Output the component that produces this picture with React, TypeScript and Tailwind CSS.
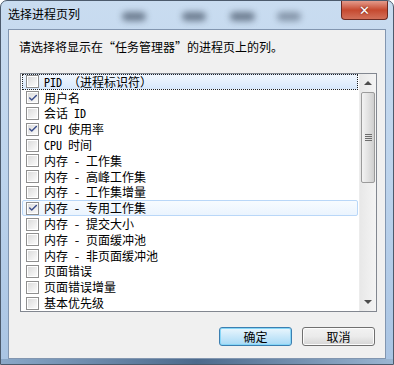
import { Check } from "lucide-react";

const FONT = {
  fontFamily: '"Noto Sans Mono CJK SC", "Noto Sans CJK SC", monospace',
};

const ITEMS: { label: string; checked?: boolean; focus?: boolean; hover?: boolean }[] = [
  { label: "PID （进程标识符）", focus: true },
  { label: "用户名", checked: true },
  { label: "会话 ID" },
  { label: "CPU 使用率", checked: true },
  { label: "CPU 时间" },
  { label: "内存 - 工作集" },
  { label: "内存 - 高峰工作集" },
  { label: "内存 - 工作集增量" },
  { label: "内存 - 专用工作集", checked: true, hover: true },
  { label: "内存 - 提交大小" },
  { label: "内存 - 页面缓冲池" },
  { label: "内存 - 非页面缓冲池" },
  { label: "页面错误" },
  { label: "页面错误增量" },
  { label: "基本优先级" },
];

function Checkbox({ checked }: { checked?: boolean }) {
  return (
    <span className="w-[13px] h-[13px] flex-shrink-0 border border-[#8f8f8f] bg-white p-[1px] flex">
      <span className="flex-1 bg-gradient-to-br from-[#dcdcdc] to-[#fbfbfb] flex items-center justify-center">
        {checked && <Check className="w-[10px] h-[10px] text-[#3c4f8c]" strokeWidth={3.5} />}
      </span>
    </span>
  );
}

function Row({ item }: { item: (typeof ITEMS)[number] }) {
  let box = "border border-transparent";
  if (item.focus)
    box = "border border-dotted border-[#222] bg-gradient-to-b from-[#f1f7fe] to-[#d7e8fc]";
  if (item.hover)
    box = "border border-[#b9d7f8] rounded-[2px] bg-gradient-to-b from-[#f7fbff] to-[#ebf4fe]";
  return (
    <div className={`h-[16px] flex items-center gap-[5px] pl-[3px] mr-[1px] ml-[1px] ${box}`}>
      <Checkbox checked={item.checked} />
      <span className="text-[12px] leading-none text-black whitespace-pre">{item.label}</span>
    </div>
  );
}

function Scrollbar() {
  return (
    <div className="w-[17px] flex flex-col bg-gradient-to-r from-[#e8e8e8] to-[#f4f4f4] border-l border-[#ececec]">
      <div className="h-[18px] flex items-center justify-center">
        <span className="w-0 h-0 border-l-[4px] border-r-[4px] border-b-[4px] border-l-transparent border-r-transparent border-b-[#4d4d4d]" />
      </div>
      <div className="h-[91px] mx-[1px] rounded-[2px] border border-[#9b9b9b] bg-gradient-to-r from-[#f3f3f3] via-[#e2e2e2] to-[#cfcfcf] flex flex-col items-center justify-center gap-[1px]">
        <span className="w-[7px] h-[1px] bg-[#6d6d6d]" />
        <span className="w-[7px] h-[1px] bg-[#6d6d6d]" />
        <span className="w-[7px] h-[1px] bg-[#6d6d6d]" />
        <span className="w-[7px] h-[1px] bg-[#6d6d6d]" />
      </div>
      <div className="flex-1" />
      <div className="h-[18px] flex items-center justify-center">
        <span className="w-0 h-0 border-l-[4px] border-r-[4px] border-t-[4px] border-l-transparent border-r-transparent border-t-[#4d4d4d]" />
      </div>
    </div>
  );
}

export default function App() {
  return (
    <div
      className="w-[394px] h-[365px] flex flex-col overflow-hidden rounded-t-[7px] border border-[#4c5a6c] bg-gradient-to-b from-[#c9dcf0] via-[#bcd3ec] to-[#a9c4e3]"
      style={FONT}
    >
      {/* Title bar with blurred glass behind */}
      <div className="h-[28px] flex items-start">
        <span className="pl-[7px] pt-[7px] flex-shrink-0 whitespace-nowrap text-[12px] leading-none text-black">
          选择进程页列
        </span>
        <div className="flex-1 flex items-center pl-[42px] pt-[11px]">
          <span className="w-[24px] h-[9px] rounded-full bg-[#4e5d70] blur-[3px] opacity-75" />
          <span className="ml-[36px] w-[24px] h-[9px] rounded-full bg-[#4e5d70] blur-[3px] opacity-75" />
          <span className="ml-[24px] w-[25px] h-[9px] rounded-full bg-[#4e5d70] blur-[3px] opacity-75" />
          <span className="ml-[22px] w-[24px] h-[9px] rounded-full bg-[#4e5d70] blur-[3px] opacity-55" />
        </div>
        <div className="mr-[5px] w-[47px] h-[19px] flex-shrink-0 rounded-b-[4px] border border-t-0 border-[#6b2a22] bg-gradient-to-b from-[#e39a8b] via-[#c6492f] to-[#d2705a] flex items-center justify-center">
          <span
            className="text-white font-bold text-[13px] leading-none"
            style={{ fontFamily: '"DejaVu Sans", sans-serif', textShadow: "0 0 2px #5a1a10" }}
          >
            ✕
          </span>
        </div>
      </div>

      {/* Client area */}
      <div className="mx-[7px] h-[330px] border border-[#8296b0] bg-[#f0f0f0] flex flex-col">
        <p className="pl-[10px] pt-[11px] h-[43px] text-[12px] leading-none text-black">
          请选择将显示在“任务管理器”的进程页上的列。
        </p>
        <div className="ml-[11px] w-[357px] h-[239px] border border-[#828790] bg-white flex overflow-hidden">
          <div className="flex-1 flex flex-col overflow-hidden">
            {ITEMS.map((it) => (
              <Row key={it.label} item={it} />
            ))}
          </div>
          <Scrollbar />
        </div>
        <div className="flex justify-end gap-[10px] pr-[10px] pt-[15px]">
          <button className="w-[73px] h-[19px] rounded-[3px] border border-[#3c7fb1] bg-gradient-to-b from-[#eaf6fd] to-[#a7d9f5] shadow-[inset_0_0_0_1px_#86d6f7] text-[12px] leading-none text-black">
            确定
          </button>
          <button className="w-[73px] h-[19px] rounded-[3px] border border-[#707070] bg-gradient-to-b from-[#f2f2f2] via-[#ebebeb] to-[#d5d5d5] shadow-[inset_0_0_0_1px_#fcfcfc] text-[12px] leading-none text-black">
            取消
          </button>
        </div>
      </div>
      <div className="flex-1 bg-gradient-to-r from-[#8aa8c8] via-[#4d6a8c] to-[#9bb6d2]" />
    </div>
  );
}
